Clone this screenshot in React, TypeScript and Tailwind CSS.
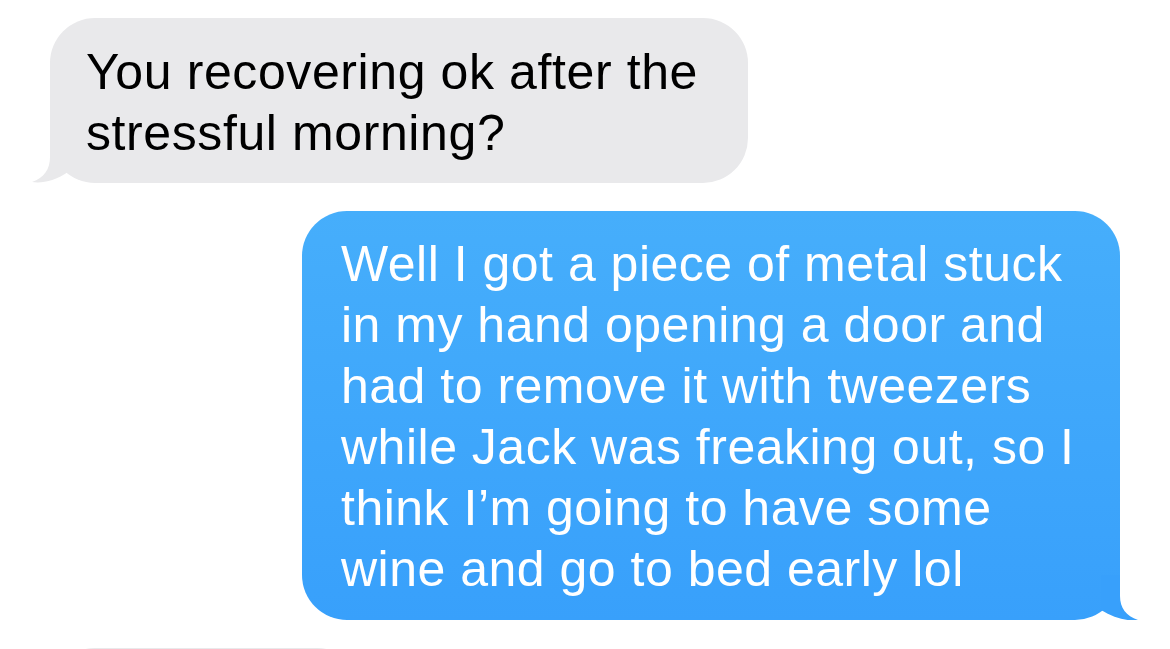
import React from "react";

const GreyTail = () => (
  <svg
    className="absolute left-[-18px] bottom-0 w-[40px] h-[45px]"
    viewBox="32 139 40 45"
    aria-hidden="true"
  >
    <path
      d="M50,139 L50,158 C50,170 44,179 32,183 C42,184.6 55,182 68,173 L68,139 Z"
      fill="#e9e9eb"
    />
  </svg>
);

const BlueTail = () => (
  <svg
    className="absolute right-[-18px] bottom-0 w-[40px] h-[45px]"
    viewBox="1098 575 40 45"
    aria-hidden="true"
  >
    <path
      d="M1120,575 L1120,596 C1120,608 1126,616 1138,620 C1128,621.6 1114,618 1101,610 L1101,575 Z"
      fill="#38a0fb"
    />
  </svg>
);

const App = () => {
  return (
    <div
      className="w-[1170px] h-[649px] overflow-hidden bg-white flex flex-col pt-[18px] px-[50px]"
      style={{ fontFamily: '"Liberation Sans", Arial, sans-serif' }}
    >
      <div className="relative self-start w-[698px] rounded-[45px] bg-[#e9e9eb] pt-[24px] pb-[19px] pl-[36px] text-[50px] leading-[61px] tracking-[0.6px] text-black whitespace-nowrap">
        You recovering ok after the
        <br />
        stressful morning?
        <GreyTail />
      </div>

      <div className="relative self-end mt-[28px] w-[818px] rounded-[45px] bg-linear-to-b from-[#46aefb] to-[#38a0fb] pt-[23px] pb-[20px] pl-[39px] text-[50px] leading-[61px] tracking-[0.5px] text-white whitespace-nowrap">
        Well I got a piece of metal stuck
        <br />
        in my hand opening a door and
        <br />
        had to remove it with tweezers
        <br />
        while Jack was freaking out, so I
        <br />
        think I’m going to have some
        <br />
        wine and go to bed early lol
        <BlueTail />
      </div>

      <div className="self-start mt-[28px] w-[312px] h-[120px] shrink-0 rounded-[45px] bg-[#e9e9eb]" />
    </div>
  );
};

export default App;
